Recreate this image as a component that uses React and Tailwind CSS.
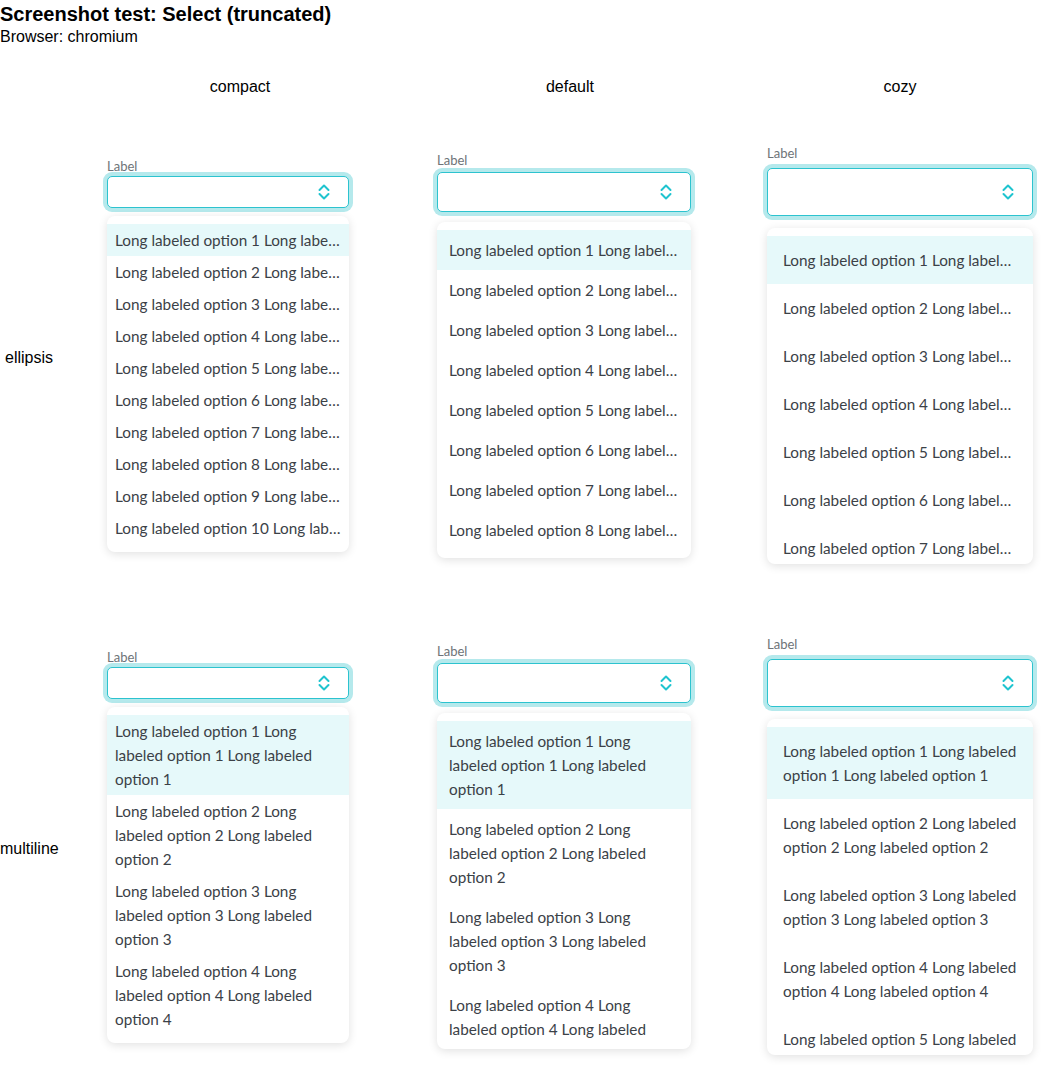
const densities = [
  { name: "compact", width: "w-[242px]", input: "h-[32px]", label: "mb-[2px]", gap: "mt-[8px]", opt: "py-1 px-2" },
  { name: "default", width: "w-[254px]", input: "h-[40px]", label: "mb-[4px]", gap: "mt-[10px]", opt: "py-2 px-3" },
  { name: "cozy", width: "w-[266px]", input: "h-[48px]", label: "mb-[7px]", gap: "mt-[12px]", opt: "py-3 px-4" },
];

const options = Array.from({ length: 12 }, (_, i) => {
  const n = i + 1;
  return `Long labeled option ${n} Long labeled option ${n} Long labeled option ${n}`;
});

function UpDown() {
  return (
    <svg width="12" height="18" viewBox="0 0 12 18" fill="none" stroke="#1fc4cf" strokeWidth="2" strokeLinecap="round" strokeLinejoin="round">
      <polyline points="1.5,7 6,2.5 10.5,7" />
      <polyline points="1.5,11 6,15.5 10.5,11" />
    </svg>
  );
}

function Select({ d, multiline }) {
  return (
    <div className={`${d.width} font-['Lato',sans-serif]`}>
      <div className={`text-[13px] leading-4 text-[#6e7378] ${d.label}`}>Label</div>
      <div className={`${d.input} flex items-center justify-end pr-[18px] rounded-[5px] border border-[#2cc3cf] bg-white ring-4 ring-[#b5e9ec]`}>
        <UpDown />
      </div>
      <div className={`${d.gap} pt-2 pb-1 rounded-lg bg-white shadow-[0_2px_10px_rgba(0,0,0,0.12)]`}>
        <div className="max-h-[324px] overflow-hidden">
          {options.map((o, i) => (
            <div
              key={i}
              className={`${d.opt} text-[15.3px] leading-6 text-[#3b4147] ${multiline ? "" : "truncate"} ${i === 0 ? "bg-[#e6f9fa]" : ""}`}
            >
              {o}
            </div>
          ))}
        </div>
      </div>
    </div>
  );
}

export default function App() {
  return (
    <div className="h-[1080px] w-full overflow-hidden bg-white text-black font-['Liberation_Sans',Arial,sans-serif]">
      <h1 className="text-xl font-bold leading-7">Screenshot test: Select (truncated)</h1>
      <div className="text-base leading-[18px]">Browser: chromium</div>

      <div className="flex pt-[31px] pb-[13px] leading-[19px]">
        <div className="w-[75px] shrink-0" />
        {densities.map((d) => (
          <div key={d.name} className="w-[330px] shrink-0 text-center">
            {d.name}
          </div>
        ))}
      </div>

      {["ellipsis", "multiline"].map((row) => (
        <div key={row} className="flex h-[491px] items-center">
          <div className="w-[58px] shrink-0 pt-[7px] text-center">{row}</div>
          <div className="w-[17px] shrink-0" />
          {densities.map((d) => (
            <div key={d.name} className="w-[330px] shrink-0 pl-8">
              <Select d={d} multiline={row === "multiline"} />
            </div>
          ))}
        </div>
      ))}
    </div>
  );
}
